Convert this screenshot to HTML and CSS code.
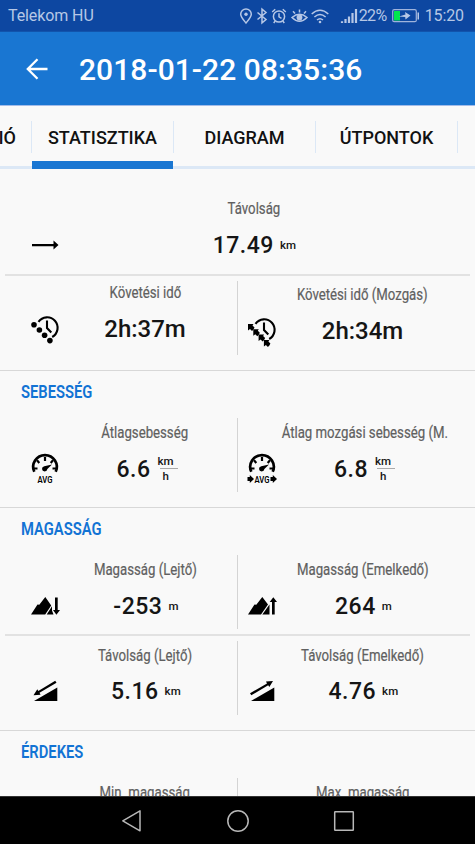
FILE: index.html
```html
<!DOCTYPE html>
<html lang="hu">
<head>
<meta charset="utf-8">
<title>2018-01-22 08:35:36</title>
<link rel="stylesheet" href="styles.css">
</head>
<body>
<div class="screen">
  <div class="status">
    <span class="carrier">Telekom HU</span>
    <svg class="status-icons" width="120" height="20" viewBox="0 0 120 20" fill="none" stroke="#b6c7e6" stroke-width="1.5">
      <path d="M8 17C5 13.500 2.700 11 2.700 8.300a5.300 5.300 0 0 1 10.600 0C13.300 11 11 13.500 8 17z"/><circle cx="8" cy="8.300" r="1.700" fill="#b6c7e6" stroke="none"/>
      <path d="M19.500 6.500l8.500 7-4 3.300V3.200l4 3.300-8.500 7"/>
      <circle cx="41" cy="10.500" r="5.600"/><path d="M41 7.300v3.500l2.500 1.500M34.200 6l3-2.700M47.800 6l-3-2.700M37.200 15l-1.500 2M44.800 15l1.500 2"/>
      <path d="M54 11.500Q61.500 5 69 11.500Q61.500 19 54 11.500zM57 7.500l-2-2.300M61.500 6.500V3.500M66 7.500l2-2.300"/><circle cx="61.500" cy="11.500" r="2.900" fill="#b6c7e6" stroke="none"/>
      <path d="M73.700 8q8.300-7.400 16.600 0M76.400 11q5.600-5 11.200 0M79 14q3-2.600 6 0"/><circle cx="82" cy="16" r="1.300" fill="#b6c7e6" stroke="none"/>
      <path stroke-width="2.200" d="M104 17v-1.800M107.500 17v-4M111 17V10.500M114.500 17V7M118 17V3"/>
    </svg>
    <span class="percent">22%</span>
    <svg class="battery" width="28" height="14" viewBox="0 0 28 14"><rect x=".7" y=".7" width="23.600" height="12" rx="1.500" fill="none" stroke="#9fb3dc" stroke-width="1.200"/><path fill="#00e64d" d="M2 2h6v9.500H2z"/><path fill="#b6c7e6" d="M7 7.400l6.500-1.900-.5-2.500 5.500 3.500-5 4-.3-2.400zM25.500 3.500h1.500v7h-1.500z"/></svg>
    <span class="clock">15:20</span>
  </div>
  <header class="appbar">
    <svg width="24" height="24" viewBox="0 0 24 24" fill="none" stroke="#fff" stroke-width="2.300"><path d="M22.500 12H3M12.500 2.300L2.800 12l9.700 9.700"/></svg>
    <h1>2018-01-22 08:35:36</h1>
  </header>
  <nav class="tabs">
    <div class="tab cut"><span>INFORMÁCIÓ</span></div>
    <div class="tab active"><span>STATISZTIKA</span></div>
    <div class="tab"><span>DIAGRAM</span></div>
    <div class="tab"><span>ÚTPONTOK</span></div>
    <div class="tab"></div>
  </nav>
  <main class="content">
    <section class="group">
      <div class="wide">
        <svg class="icon" width="32" height="32" viewBox="0 0 32 32"><path d="M3 15h21.500v-3.500l5 4.500-5 4.500V17.200H3z"/></svg>
        <div class="stat"><div class="label">Távolság</div><div class="value">17.49<small>km</small></div></div>
      </div>
      <hr>
      <div class="row early">
        <div class="cell">
          <svg class="icon" width="32" height="32" viewBox="0 0 32 32"><path d="M9.500 8.800A10.500 10.500 0 1 1 23.200 24M18 7.500v7.500l4.300 4.500" fill="none" stroke="#000" stroke-width="2.100"/><circle cx="5" cy="11.700" r="2.800"/><circle cx="10.400" cy="17" r="2.800"/><circle cx="15.600" cy="22.300" r="2.800"/><circle cx="20.900" cy="27.600" r="2.800"/></svg>
          <div class="stat"><div class="label">Követési idő</div><div class="value time">2h:37m</div></div>
        </div>
        <div class="cell lower">
          <svg class="icon" width="32" height="32" viewBox="0 0 32 32"><defs><path id="chev" d="M-3-3h5.500l-1 1.500 2 2-1 2-1.500 1.500-2-2L-3 3.500z"/></defs><path d="M9.500 8.800A10.500 10.500 0 1 1 23.200 24M18 7.500v7.500l4.300 4.500" fill="none" stroke="#000" stroke-width="2.100"/><use href="#chev" x="5" y="12"/><use href="#chev" x="10.300" y="17.300"/><use href="#chev" x="15.600" y="22.600"/><use href="#chev" x="20.900" y="27.900"/></svg>
          <div class="stat"><div class="label">Követési idő (Mozgás)</div><div class="value time">2h:34m</div></div>
        </div>
      </div>
    </section>
    <section class="group">
      <h2>SEBESSÉG</h2>
      <div class="row">
        <div class="cell">
          <svg class="icon" width="32" height="32" viewBox="0 0 32 32"><path d="M5.300 18.800A11.800 11.800 0 1 1 26.700 18.800" fill="none" stroke="#000" stroke-width="2.700"/><path d="M16 4v4M8 7.300l2.300 2.600M24 7.300l-2.300 2.600M4.500 15.500h4M27.500 15.500h-4" stroke="#000" stroke-width="2.200"/><path d="M15.300 13.200l7.700-1.700-4.600 4.600a2.700 2.700 0 1 1-3.100-2.900z"/><text class="avg" x="16" y="29.500" textLength="15" lengthAdjust="spacingAndGlyphs">AVG</text></svg>
          <div class="stat"><div class="label">Átlagsebesség</div><div class="value rate">6.6<span class="frac"><b>km</b><b>h</b></span></div></div>
        </div>
        <div class="cell">
          <svg class="icon" width="32" height="32" viewBox="0 0 32 32"><path d="M5.300 18.800A11.800 11.800 0 1 1 26.700 18.800" fill="none" stroke="#000" stroke-width="2.700"/><path d="M16 4v4M8 7.300l2.300 2.600M24 7.300l-2.300 2.600M4.500 15.500h4M27.500 15.500h-4" stroke="#000" stroke-width="2.200"/><path d="M15.300 13.200l7.700-1.700-4.600 4.600a2.700 2.700 0 1 1-3.100-2.900z"/><text class="avg" x="16" y="29.500" textLength="15" lengthAdjust="spacingAndGlyphs">AVG</text><path d="M1.500 24h2.300v-2l4.200 4-4.200 4v-2H1.500zM24.500 24h2.300v-2l4.200 4-4.200 4v-2h-2.300z"/></svg>
          <div class="stat"><div class="label long">Átlag mozgási sebesség (M.</div><div class="value rate">6.8<span class="frac"><b>km</b><b>h</b></span></div></div>
        </div>
      </div>
    </section>
    <section class="group">
      <h2>MAGASSÁG</h2>
      <div class="row">
        <div class="cell">
          <svg class="icon" width="32" height="32" viewBox="0 0 32 32"><path d="M2 24.500L8.500 14.500l1.800.3L16.300 7l5.900 8.500-6 9zM17.700 24.500l5.300-8.300v4.300l1.500 4zM26 7.500h2.700V20H31l-3.600 4.700L24 20h2z"/></svg>
          <div class="stat"><div class="label">Magasság (Lejtő)</div><div class="value">-253<small>m</small></div></div>
        </div>
        <div class="cell">
          <svg class="icon" width="32" height="32" viewBox="0 0 32 32"><path d="M2 24.500L8.500 14.500l1.800.3L16.300 7l5.700 7.500-7 10zM16.300 24.500l7.200-10v10zM26 24.500V12h-2.300l3.600-4.700L31 12h-2.300v12.500z"/></svg>
          <div class="stat"><div class="label">Magasság (Emelkedő)</div><div class="value">264<small>m</small></div></div>
        </div>
      </div>
      <hr>
      <div class="row second">
        <div class="cell">
          <svg class="icon" width="32" height="32" viewBox="0 0 32 32"><path d="M5 25l23.300-13.500V25zM27.500 6.800L10.500 16.800l1 1.900-7 .5 3.800-5.900 1 1.600L26.200 4.700z"/></svg>
          <div class="stat"><div class="label">Távolság (Lejtő)</div><div class="value">5.16<small>km</small></div></div>
        </div>
        <div class="cell">
          <svg class="icon" width="32" height="32" viewBox="0 0 32 32"><path d="M5 25l23.300-13.500V25zM4 17.300L21 7.400l-1-1.800 7-.6-3.700 5.900-1.100-1.600-16.900 10z"/></svg>
          <div class="stat"><div class="label">Távolság (Emelkedő)</div><div class="value">4.76<small>km</small></div></div>
        </div>
      </div>
    </section>
    <section class="group">
      <h2>ÉRDEKES</h2>
      <div class="row second">
        <div class="cell"><div class="icon"></div><div class="stat"><div class="label">Min. magasság</div></div></div>
        <div class="cell"><div class="icon"></div><div class="stat"><div class="label">Max. magasság</div></div></div>
      </div>
    </section>
  </main>
  <footer class="navbar">
    <svg width="24" height="24" viewBox="0 0 24 24"><path d="M20 1.800v20L2.800 11.800z"/></svg>
    <svg width="24" height="24" viewBox="0 0 24 24"><circle cx="12" cy="12" r="10.200"/></svg>
    <svg width="24" height="24" viewBox="0 0 24 24"><rect x="2.700" y="2.700" width="18.600" height="18.600" rx=".5"/></svg>
  </footer>
</div>
</body>
</html>
```
FILE: styles.css
```css
* { box-sizing: border-box; }
body { margin: 0; font-family: Roboto, "Liberation Sans", sans-serif; background: #f9f9f9; color: #151515; }
.screen { width: 475px; height: 844px; display: flex; flex-direction: column; overflow: hidden; }
.status { height: 32px; flex: none; display: flex; align-items: center; background: #0d47a1; color: #b6c7e6; padding: 0 11px 0 8px; font-size: 16px; border-bottom: 1px solid #1254ac; }
.carrier { flex: 1; letter-spacing: -.1px; }
.status-icons { margin-right: 1px; }
.percent { width: 30px; letter-spacing: -.6px; }
.battery { margin: 0 5px 0 3px; }
.clock { letter-spacing: -.1px; }
.appbar { height: 74px; flex: none; display: flex; align-items: center; background: #1976d2; color: #fff; padding-left: 25px; border-bottom: 1px solid #a3bce9; }
.appbar h1 { margin: 2px 0 0 30px; font-size: 30px; font-weight: 500; letter-spacing: .05px; white-space: nowrap; }
.tabs { height: 63px; flex: none; display: flex; border-bottom: 3px solid #dce8f6; }
.tab { position: relative; width: 142px; flex: none; height: 63px; display: flex; align-items: center; justify-content: center; padding-right: 1px; font-size: 18px; font-weight: 500; color: #111; }
.tab::after { content: ""; position: absolute; right: 0; top: 15px; width: 1px; height: 32px; background: #dce8f6; }
.tab.cut { width: 32px; justify-content: flex-end; padding-right: 16px; }
.tab.active::before { content: ""; position: absolute; left: 0; bottom: 0; width: 141px; height: 8px; background: #1976d2; }
.content { flex: 1; min-height: 0; overflow: hidden; }
.group + .group { border-top: 1px solid #d8d8d8; }
h2 { margin: 0; height: 47px; padding: 9px 0 0 21px; font-size: 18px; line-height: 24px; font-weight: 600; color: #1273d4; transform: scaleX(.82); transform-origin: 21px 0; }
hr { border: 0; height: 2px; margin: 0 5px; background: #e2e2e2; }
.wide { height: 105px; display: flex; padding: 30px 0 0 29px; }
.wide .stat { margin-right: 21px; }
.row { display: grid; grid-template-columns: 232px 233px; margin: 5px 5px 15px; height: 74px; }
.row:has(+ hr) { margin-bottom: 5px; }
.group h2 + .row { margin-top: 0; }
.cell { display: flex; padding: 5px 0 0 24px; }
.cell + .cell { border-left: 1px solid #d4d4d4; padding-left: 8px; }
.icon { flex: none; width: 32px; height: 32px; margin-top: 30px; }
.stat { flex: 1; min-width: 0; margin-left: -8px; display: flex; flex-direction: column; align-items: center; }
.cell + .cell .stat { margin-right: 15px; }
.label { height: 20px; line-height: 20px; font-size: 16px; color: #606060; white-space: nowrap; transform: scaleX(.825); -webkit-text-stroke: .2px #606060; }
.label.long { margin-left: 4px; }
.value { height: 28px; line-height: 28px; margin-top: 13px; padding-left: 2px; font-size: 23px; font-weight: 500; letter-spacing: .5px; white-space: nowrap; }
.second .value { margin-top: 12px; }
.value small { font-size: 11.500px; margin-left: 6px; letter-spacing: .2px; vertical-align: 4px; line-height: 1; }
.value.time { font-size: 24px; letter-spacing: 0; padding-left: 0; margin-top: 12px; }
.value.rate { padding-left: 4px; }
.frac { display: inline-block; width: 20px; margin-left: 7px; vertical-align: middle; margin-top: -2px; margin-bottom: 2px; font-size: 11.500px; letter-spacing: 0; }
.frac b { display: block; font-weight: 500; text-align: left; line-height: 13px; }
.frac b + b { border-top: 1px solid #aaa; padding-left: 3px; margin-left: 2px; line-height: 14px; }
.early .cell { padding-top: 2px; }
.early .lower { padding-top: 4px; }
.avg { font: 600 9px Roboto, sans-serif; text-anchor: middle; }
.navbar { height: 48px; flex: none; display: flex; justify-content: center; align-items: center; gap: 82px; background: #000; border-top: 1px solid #333; }
.navbar svg { fill: none; stroke: #b8b8b8; stroke-width: 1.500; stroke-linejoin: round; }
```
